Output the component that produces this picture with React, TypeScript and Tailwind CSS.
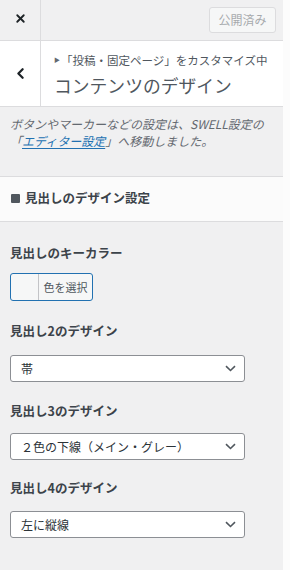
import { X, ChevronLeft } from "lucide-react";

const font = "font-['Noto_Sans_CJK_JP','Noto_Sans',sans-serif]";

const Chevron = () => (
  <svg width="11" height="7" viewBox="0 0 11 7" className="shrink-0">
    <path d="M1 1.2 L5.5 5.5 L10 1.2" fill="none" stroke="#50575e" strokeWidth="1.6" />
  </svg>
);

const Select = ({ value, className }: { value: string; className?: string }) => (
  <div
    className={`flex h-[27px] w-[235px] items-center justify-between rounded-[3px] border border-[#8c8f94] bg-white pl-[10px] pr-[8px] text-[12px] text-[#2c3338] ${className ?? ""}`}
  >
    <span>{value}</span>
    <Chevron />
  </div>
);

export default function App() {
  return (
    <div className={`flex h-[570px] w-[290px] overflow-hidden bg-white ${font}`}>
      <div className="flex w-[283px] shrink-0 flex-col bg-[#f0f0f1]">
        {/* top bar */}
        <div className="flex h-[41px] border-b border-[#dcdcde]">
          <div className="flex w-[41px] items-center justify-center border-r border-[#dcdcde] pb-[3px]">
            <X size={13} strokeWidth={3.4} color="#1d2327" />
          </div>
          <div className="flex flex-1 items-center justify-end pr-[7px] pb-[1px]">
            <div className="flex h-[26px] w-[67px] items-center justify-center rounded-[3px] border border-[#dcdcde] bg-[#f6f7f7] text-[12px] text-[#a7aaad]">
              公開済み
            </div>
          </div>
        </div>

        {/* section title */}
        <div className="flex h-[66px] border-b border-[#dcdcde] bg-white">
          <div className="flex w-[41px] items-center justify-center border-r border-[#dcdcde]">
            <ChevronLeft size={17} strokeWidth={3.2} color="#1d2327" />
          </div>
          <div className="flex flex-col pl-[13px] pt-[11px]">
            <div className="flex items-center text-[11.5px] leading-[16px] text-[#50575e]">
              <span className="mr-[1px] text-[6px] text-[#646970]">▶</span>
              「投稿・固定ページ」をカスタマイズ中
            </div>
            <div className="mt-[5px] text-[17.8px] leading-[24px] text-[#50575e]">コンテンツのデザイン</div>
          </div>
        </div>

        {/* note */}
        <div className="h-[70px] border-b border-[#dcdcde] px-[10px] pt-[9px] text-[12px] italic leading-[16.5px] text-[#646970]">
          ボタンやマーカーなどの設定は、SWELL設定の
          <br />
          「<span className="text-[#2271b1] underline underline-offset-2">エディター設定</span>」へ移動しました。
        </div>

        {/* heading */}
        <div className="flex h-[45px] items-center border-b border-[#dcdcde] bg-[#fbfbfb] pl-[11px] pb-[1px]">
          <span className="mr-[5px] inline-block h-[9px] w-[9px] rounded-[1px] bg-[#50575e]" />
          <span className="text-[12.5px] font-bold text-[#3c434a]">見出しのデザイン設定</span>
        </div>

        {/* fields */}
        <div className="flex flex-col px-[10px] text-[#3c434a]">
          <div className="mt-[22px] text-[12.5px] font-bold leading-[18px]">見出しのキーカラー</div>
          <div className="mt-[11px] flex h-[28px] w-[83px] overflow-hidden rounded-[3px] border border-[#2271b1] bg-[#f6f7f7]">
            <div className="w-[28px] border-r border-[#c3c4c7]" />
            <div className="flex flex-1 items-center justify-center text-[11px] text-[#50575e]">色を選択</div>
          </div>

          <div className="mt-[21px] text-[12.5px] font-bold leading-[18px]">見出し2のデザイン</div>
          <Select value="帯" className="mt-[15px]" />

          <div className="mt-[20px] text-[12.5px] font-bold leading-[18px]">見出し3のデザイン</div>
          <Select value="２色の下線（メイン・グレー）" className="mt-[13px]" />

          <div className="mt-[19px] text-[12.5px] font-bold leading-[18px]">見出し4のデザイン</div>
          <Select value="左に縦線" className="mt-[14px]" />
        </div>
      </div>
      <div className="flex-1 bg-[#fcfcfc]" />
    </div>
  );
}
